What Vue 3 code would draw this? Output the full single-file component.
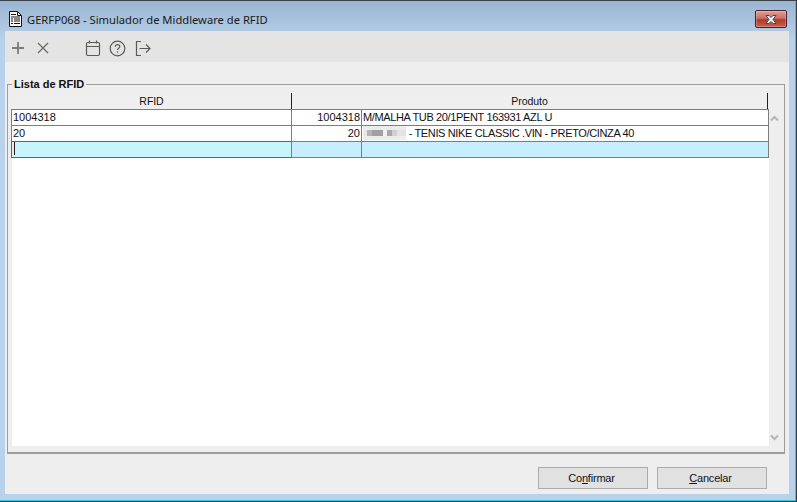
<script setup>
const rows = [
  { rfid: '1004318', code: '1004318', product: 'M/MALHA TUB 20/1PENT 163931 AZL U', blur: false },
  { rfid: '20', code: '20', product: ' - TENIS NIKE CLASSIC .VIN - PRETO/CINZA 40', blur: true },
]
</script>

<template>
  <div class="window">
    <header class="titlebar">
      <svg class="doc" width="13" height="16" viewBox="0 0 13 16">
        <path d="M.5 .5H8.500L12.500 4.500V15.500H.5Z" fill="#fff" stroke="#111"/>
        <path d="M8.500 1V4.500H12" fill="none" stroke="#111"/>
        <path d="M2 3.500H7M2 6H11M2 8H4M5 8H11M2 10H4M5 10H11M2 12.500H4M5 12.500H11" stroke="#111" stroke-width="1.200"/>
      </svg>
      <span class="title">GERFP068 - Simulador de Middleware de RFID</span>
      <button class="close" aria-label="Fechar">
        <svg width="16" height="11" viewBox="0 0 16 11">
          <path d="M3 1.500H6L8 3.500L10 1.500H13L10 5.500L13 9.500H10L8 7.500L6 9.500H3L6 5.500Z" fill="#f2f2f6" stroke="#3a4a5e"/>
        </svg>
      </button>
    </header>

    <div class="client">
      <nav class="toolbar">
        <svg class="ic plus" width="14" height="14" viewBox="0 0 14 14"><path d="M7 1V13M1 7H13" stroke="#7d7d7d" stroke-width="1.800"/></svg>
        <svg class="ic cross" width="14" height="14" viewBox="0 0 14 14"><path d="M2 2L12 12M12 2L2 12" stroke="#6a6a6a" stroke-width="1.300"/></svg>
        <svg class="ic cal" width="16" height="17" viewBox="0 0 16 17" fill="none" stroke="#5a5a5a" stroke-width="1.200">
          <rect x="1.500" y="2.500" width="13" height="13" rx="1.500"/>
          <path d="M1.500 6.500H14.500M4.500 .5V3.500M11.500 .5V3.500"/>
        </svg>
        <svg class="ic help" width="17" height="17" viewBox="0 0 17 17" fill="none" stroke="#5a5a5a" stroke-width="1.200">
          <circle cx="8.500" cy="8.500" r="7.300"/>
          <path d="M6.200 6.700C6.200 5.300 7.200 4.600 8.500 4.600C9.800 4.600 10.800 5.400 10.800 6.600C10.800 8.100 8.500 8.300 8.500 10"/>
          <path d="M8.500 11.400V12.800"/>
        </svg>
        <svg class="ic exit" width="16" height="17" viewBox="0 0 16 17" fill="none" stroke="#5a5a5a" stroke-width="1.200">
          <path d="M6 1.500H1.500V15.500H6"/>
          <path d="M4.500 8.500H15M11 4.500L15 8.500L11 12.500"/>
        </svg>
      </nav>

      <main class="body">
        <fieldset class="group">
          <legend>Lista de RFID</legend>
          <div class="grid-wrap">
            <div class="table">
              <div class="head">
                <div class="hcell rfid">RFID</div>
                <div class="hcell prod">Produto</div>
              </div>
              <div class="rowlist">
                <div v-for="r in rows" :key="r.rfid" class="row">
                  <div class="cell rfid">{{ r.rfid }}</div>
                  <div class="cell code">{{ r.code }}</div>
                  <div class="cell product">
                    <span v-if="r.blur" class="blur"></span>{{ r.product }}
                  </div>
                </div>
                <div class="row active">
                  <div class="cell rfid"><span class="caret"></span></div>
                  <div class="cell code"></div>
                  <div class="cell product"></div>
                </div>
              </div>
            </div>
            <div class="scroll">
              <svg width="9" height="7" viewBox="0 0 9 7"><path d="M1 5.500L4.500 2L8 5.500" fill="none" stroke="#b5b5b5" stroke-width="2"/></svg>
              <svg width="9" height="7" viewBox="0 0 9 7"><path d="M1 1.500L4.500 5L8 1.500" fill="none" stroke="#b5b5b5" stroke-width="2"/></svg>
            </div>
          </div>
        </fieldset>
        <footer class="actions">
          <button class="btn">Co<u>n</u>firmar</button>
          <button class="btn"><u>C</u>ancelar</button>
        </footer>
      </main>
    </div>
  </div>
</template>

<style>
html, body { margin: 0; padding: 0; }
</style>

<style scoped>
.window {
  width: 797px;
  height: 502px;
  box-sizing: border-box;
  display: flex;
  flex-direction: column;
  border-top: 1px solid #3c4248;
  border-right: 1px solid #2c3e46;
  border-bottom: 1px solid #2c3e46;
  box-shadow: inset -1px -1px 0 #35c8dc;
  background: linear-gradient(180deg, #9ab6d2 0, #b9d1ea 40px, #b9d1ea 100%);
  font-family: "Liberation Sans", Arial, sans-serif;
  color: #111;
  overflow: hidden;
}
.titlebar {
  height: 30px;
  display: flex;
  align-items: center;
  box-sizing: border-box;
  padding: 6px 9px 0 9px;
  flex: none;
}
.doc { flex: none; }
.title {
  margin-left: 5px;
  font-family: "Noto Sans", sans-serif;
  font-size: 11.200px;
  color: #1a1a1a;
  flex: 1;
}
.close {
  width: 32px;
  height: 18px;
  padding: 0;
  border: 1px solid #4a2030;
  border-radius: 2px;
  background: linear-gradient(180deg, #dba196 0, #c9705f 45%, #b03a28 55%, #c8604c 100%);
  box-shadow: inset 0 0 0 1px rgba(255,255,255,.25);
  display: flex;
  align-items: center;
  justify-content: center;
}
.client {
  flex: 1;
  margin: 0 7px 7px 5px;
  display: flex;
  flex-direction: column;
  min-height: 0;
  background: #eeeeee;
}
.toolbar {
  height: 31px;
  flex: none;
  background: #e4e4e4;
  display: flex;
  align-items: center;
  box-sizing: border-box;
  padding: 3px 0 0 6px;
}
.ic { flex: none; }
.cross { margin-left: 11px; }
.cal { margin-left: 35px; }
.help { margin-left: 8px; }
.exit { margin-left: 9px; }
.body {
  flex: 1;
  display: flex;
  flex-direction: column;
  min-height: 0;
  padding: 0 4px 0 2px;
}
.group {
  margin: 16px 0 0;
  padding: 2px 1px 0 4px;
  height: 376px;
  box-sizing: border-box;
  border: 1px solid #9c9c9c;
  border-bottom-width: 2px;
  min-width: 0;
  flex: none;
}
legend {
  margin-left: 0;
  padding: 0 2px;
  font-size: 11px;
  font-weight: 700;
  line-height: 13px;
  color: #111;
}
.grid-wrap {
  display: flex;
  height: 353px;
}
.table {
  width: 757px;
  flex: none;
  background: #fff;
  display: flex;
  flex-direction: column;
}
.head {
  height: 16px;
  display: flex;
  background: #efefef;
  font-size: 10.500px;
  letter-spacing: -.05px;
  flex: none;
}
.hcell {
  text-align: center;
  line-height: 16px;
  box-sizing: border-box;
  border-right: 1px solid #222;
}
.hcell.rfid { width: 280px; }
.hcell.prod { width: 476px; }
.rowlist { border-top: 1px solid #7d7d7d; margin: 0 0 0 -1px; }
.row {
  display: flex;
  height: 16px;
  box-sizing: border-box;
  border-bottom: 1px solid #7d7d7d;
  font-size: 11px;
  line-height: 14px;
}
.row .cell { box-sizing: border-box; border-right: 1px solid #7d7d7d; padding: 0 1px; white-space: pre; overflow: hidden; }
.cell.rfid { width: 281px; border-left: 1px solid #7d7d7d; }
.cell.code { width: 70px; text-align: right; }
.cell.product { flex: 1; letter-spacing: -.36px; }
.row.active .cell.rfid {
  height: 17px;
  margin-top: -1px;
  background: #c6f6fc;
  border: 1px solid #1a78c8;
  border-right-color: #7d7d7d;
}
.row.active .code, .row.active .product { background: #c7eefc; }
.caret { display: block; width: 1px; height: 13px; background: #4a1010; margin: 0 0 0 1px; }
.blur {
  display: inline-block;
  width: 43px;
  height: 14px;
  vertical-align: top;
  background:
    linear-gradient(180deg, #ececec 0 4px, transparent 4px 10px, #eeeeee 10px 14px),
    linear-gradient(90deg, #e8e8e8 0 4px, #b4b4b4 4px 9px, #a0a0a0 9px 20px, #f0f0f0 20px 24px, #a8a8a8 24px 29px, #d0d0d0 29px 34px, #e4e4e4 34px 43px);
}
.scroll {
  width: 11px;
  flex: none;
  display: flex;
  flex-direction: column;
  justify-content: space-between;
  align-items: center;
  padding: 22px 0 5px;
  box-sizing: border-box;
}
.actions {
  display: flex;
  justify-content: flex-end;
  gap: 9px;
  padding: 13px 18px 0 0;
}
.btn {
  width: 110px;
  height: 22px;
  box-sizing: border-box;
  padding: 0 3px 0 0;
  border: 1px solid #ababab;
  background: #e1e1e1;
  font-family: "Liberation Sans", Arial, sans-serif;
  font-size: 11px;
  letter-spacing: -.2px;
  color: #111;
}
</style>
